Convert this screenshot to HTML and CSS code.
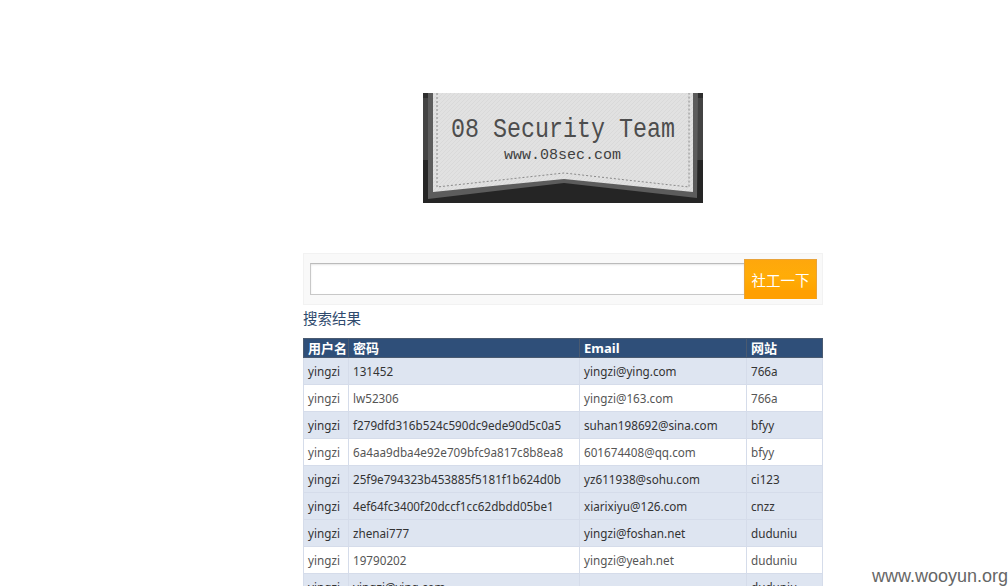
FILE: index.html
```html
<!DOCTYPE html>
<html lang="zh">
<head>
<meta charset="utf-8">
<title>08 Security Team</title>
<link rel="stylesheet" href="styles.css">
</head>
<body>
<div class="page">
  <div class="logo">
    <svg class="logo-art" width="280" height="110" viewBox="0 0 280 110">
      <defs>
        <pattern id="hatch" width="4" height="4" patternUnits="userSpaceOnUse">
          <rect width="4" height="4" fill="#e1e1e1"/>
          <path d="M-1 1L1 -1M0 4L4 0M3 5L5 3" stroke="#d9d9d9" stroke-width="1"/>
        </pattern>
      </defs>
      <rect width="280" height="110" fill="#262626"/>
      <rect width="280" height="5" fill="#2e2e2e"/>
      <rect y="5" width="280" height="62" fill="#434343"/>
      <rect y="67" width="280" height="43" fill="#252525"/>
      <polygon points="5,0 275,0 274,105 141,90 5,106" fill="#5c5c5c"/>
      <polygon points="10,0 270,0 270,99 141,86 10,99" fill="url(#hatch)"/>
      <path d="M14 0V94L141 80L266 94V0" fill="none" stroke="#8a8a8a" stroke-width="1" stroke-dasharray="2 2"/>
      <text class="logo-title" x="28" y="44" textLength="224" lengthAdjust="spacingAndGlyphs">08 Security Team</text>
      <text class="logo-url" x="81" y="66" textLength="117" lengthAdjust="spacingAndGlyphs">www.08sec.com</text>
    </svg>
  </div>
  <form class="search">
    <input class="search-input" type="text">
    <button class="search-btn" type="button">社工一下</button>
  </form>
  <h2 class="result-title">搜索结果</h2>
  <table class="results">
    <thead>
      <tr><th class="c1">用户名</th><th class="c2">密码</th><th class="c3">Email</th><th>网站</th></tr>
    </thead>
    <tbody>
      <tr><td>yingzi</td><td>131452</td><td>yingzi@ying.com</td><td>766a</td></tr>
      <tr><td>yingzi</td><td>lw52306</td><td>yingzi@163.com</td><td>766a</td></tr>
      <tr><td>yingzi</td><td>f279dfd316b524c590dc9ede90d5c0a5</td><td>suhan198692@sina.com</td><td>bfyy</td></tr>
      <tr><td>yingzi</td><td>6a4aa9dba4e92e709bfc9a817c8b8ea8</td><td>601674408@qq.com</td><td>bfyy</td></tr>
      <tr class="alt"><td>yingzi</td><td>25f9e794323b453885f5181f1b624d0b</td><td>yz611938@sohu.com</td><td>ci123</td></tr>
      <tr class="alt"><td>yingzi</td><td>4ef64fc3400f20dccf1cc62dbdd05be1</td><td>xiarixiyu@126.com</td><td>cnzz</td></tr>
      <tr class="alt"><td>yingzi</td><td>zhenai777</td><td>yingzi@foshan.net</td><td>duduniu</td></tr>
      <tr><td>yingzi</td><td>19790202</td><td>yingzi@yeah.net</td><td>duduniu</td></tr>
      <tr class="alt"><td>yingzi</td><td>yingzi@ying.com</td><td></td><td>duduniu</td></tr>
    </tbody>
  </table>
</div>
<div class="watermark">www.wooyun.org</div>
</body>
</html>
```
FILE: styles.css
```css
html, body {
  margin: 0;
  height: 586px;
  overflow: hidden;
  background: #fff;
}
body {
  font-family: "Noto Sans", "Noto Sans CJK SC", sans-serif;
  font-size: 11.7px;
  color: #333;
}
.page {
  width: 520px;
  margin-left: 303px;
  padding-top: 93px;
}
.logo {
  display: flex;
  justify-content: center;
  height: 110px;
}
.logo-art { display: block; }
.logo-title {
  font-family: "Liberation Mono", "DejaVu Sans Mono", monospace;
  font-size: 28px;
  fill: #4d4d4d;
}
.logo-url {
  font-family: "Liberation Mono", "DejaVu Sans Mono", monospace;
  font-size: 15px;
  fill: #3f3f3f;
}
.search {
  display: flex;
  align-items: flex-start;
  box-sizing: border-box;
  height: 52px;
  margin-top: 50px;
  padding: 5px 5px 0 6px;
  background: #f9f9f9;
  border: 1px solid #f2f2f2;
}
.search-input {
  box-sizing: border-box;
  flex: 1;
  height: 32px;
  margin-top: 4px;
  padding: 0 6px;
  background: #fff;
  border: 1px solid #c8c8c8;
  border-top-color: #bbb;
  border-right: 0;
  box-shadow: inset 0 1px 2px #e6e6e6;
  outline: 0;
}
.search-btn {
  box-sizing: border-box;
  width: 73px;
  height: 40px;
  padding: 0;
  background: linear-gradient(#fea70c, #ffac08 40%, #ffa500 78%, #e8a33a 78%, #e8a33a 80%, #ff9f00 80%);
  border: 1px solid #e8a33a;
  border-bottom-color: #ff9f00;
  color: #fff;
  font-family: "Noto Sans CJK SC", sans-serif;
  font-size: 14.5px;
}
.result-title {
  margin: 3px 0 0;
  height: 30px;
  font-family: "Noto Sans CJK SC", sans-serif;
  font-size: 14.5px;
  font-weight: 400;
  line-height: 20px;
  color: #2f4a6d;
}
.results {
  width: 520px;
  table-layout: fixed;
  border-collapse: collapse;
}
.results th {
  height: 18px;
  padding: 0 0 0 4px;
  background: #2f4f79;
  border: 1px solid #4a5a70;
  border-left-color: #cfd8e6;
  color: #fff;
  font-family: "Noto Sans", "Noto Sans CJK SC", sans-serif;
  font-size: 13px;
  font-weight: 700;
  line-height: 13px;
  text-align: left;
  white-space: nowrap;
  overflow: hidden;
}
.results th:first-child { border-left-color: #4a5a70; }
.results th:last-child { border-right-color: #4a5a70; }
.c1 { width: 40px; }
.c2 { width: 226px; }
.c3 { width: 162px; }
.results td {
  height: 26px;
  padding: 0 0 0 4px;
  background: #fff;
  border: 1px solid #d5dcea;
  color: #555;
  line-height: 16px;
  white-space: nowrap;
  overflow: hidden;
}
.results tbody tr:nth-child(1) td,
.results tbody tr:nth-child(3) td,
.results .alt td {
  background: #dee5f1;
  color: #333;
}
.watermark {
  position: absolute;
  right: 0;
  bottom: 0;
  font-family: "Liberation Sans", sans-serif;
  font-size: 18px;
  line-height: 20px;
  color: #666;
}
```
